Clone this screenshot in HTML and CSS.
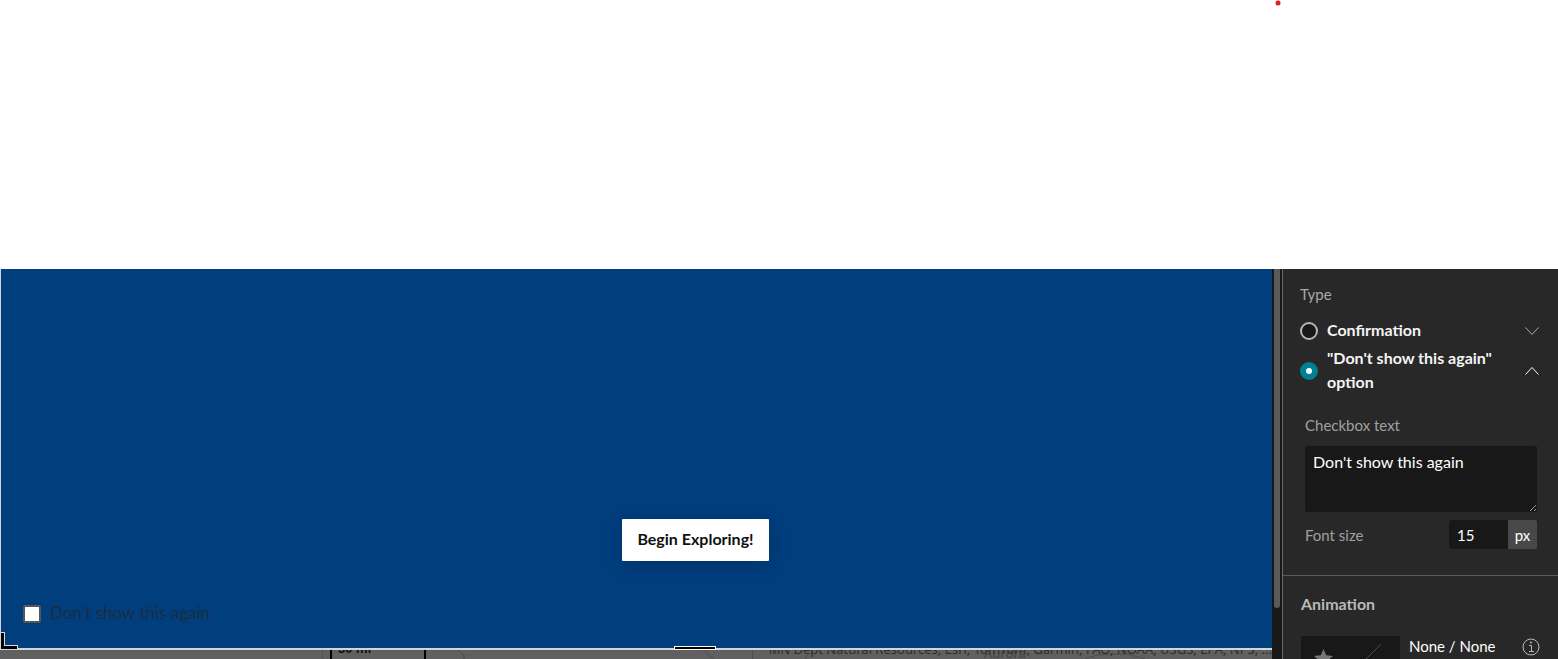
FILE: index.html
```html
<!DOCTYPE html>
<html lang="en">

<head>
  <meta charset="utf-8">
  <meta name="viewport" content="width=device-width, initial-scale=1">
  <title>Splash settings</title>
  <link rel="stylesheet" href="styles.css">
</head>

<body>
  <header class="top">
    <svg class="dot" width="6" height="6" viewBox="0 0 6 6"><circle cx="3" cy="3" r="2.5" fill="#e81c23"/></svg>
  </header>
  <div class="builder">
    <main class="canvas">
      <section class="splash">
        <button class="begin" type="button">Begin Exploring!</button>
        <label class="again"><input type="checkbox"><span>Don't show this again</span></label>
        <svg class="corner" width="18" height="18" viewBox="0 0 18 18">
          <path d="M0 0H4V13H17V17H0Z" fill="#d8d8d8"/>
          <path d="M0 1H3V14H16V17H0Z" fill="#000"/>
        </svg>
        <div class="handle"></div>
      </section>
      <div class="map">
        <svg class="roads" width="1272" height="9" viewBox="0 0 1272 9" fill="none" stroke="#4d4d4d">
          <path d="M322.500 0V9" stroke-dasharray="3 2"/>
          <path d="M457 0l7 5v4M703 0l11 9M752.500 0V9M805 9l4-6M1085 9l12-4 30-1 18 5"/>
        </svg>
        <span class="scale">30 mi</span>
        <span class="city">Aurora</span>
        <span class="credits">MN Dept Natural Resources, Esri, TomTom, Garmin, FAO, NOAA, USGS, EPA, NPS, ...</span>
      </div>
    </main>
    <div class="scrollbar"><div class="thumb"></div></div>
    <aside class="panel">
      <section class="type">
        <h2>Type</h2>
        <div class="option">
          <input type="radio" name="type" id="confirmation">
          <label for="confirmation">Confirmation</label>
          <svg class="down" width="14" height="8" viewBox="0 0 14 8"><path d="M.5.5L7 7.500 13.500.5"/></svg>
        </div>
        <div class="option tall">
          <input type="radio" name="type" id="dontshow" checked>
          <label for="dontshow">"Don't show this again" option</label>
          <svg class="up" width="14" height="8" viewBox="0 0 14 8"><path d="M.5 7.500L7 .5l6.500 7"/></svg>
        </div>
        <div class="fields">
          <label for="text">Checkbox text</label>
          <textarea id="text">Don't show this again</textarea>
          <div class="size">
            <label for="size">Font size</label>
            <div class="number"><input type="text" id="size" value="15"><span>px</span></div>
          </div>
        </div>
      </section>
      <section class="animation">
        <h3>Animation</h3>
        <div class="effect">
          <button class="preview" type="button" aria-label="Choose animation">
            <svg width="99" height="50" viewBox="0 0 99 50">
              <path d="M22.500 13l2.700 6.200 6.800.7-5.100 4.500 1.500 6.600-5.900-3.400-5.900 3.400 1.500-6.600-5.100-4.500 6.800-.7z" fill="#777"/>
              <path d="M80 8L52 36" stroke="#4a4a4a" fill="none"/>
            </svg>
          </button>
          <span>None / None</span>
          <svg class="info" width="18" height="18" viewBox="0 0 18 18" fill="none" stroke="#b8b8b8">
            <circle cx="9" cy="9" r="8"/>
            <path d="M7 7.500h2.500V13M7 13.500h5"/>
            <path d="M8 4.500h2" stroke-width="1.500"/>
          </svg>
        </div>
      </section>
    </aside>
  </div>
</body>

</html>
```
FILE: styles.css
```css
* {
  box-sizing: border-box;
}

body {
  display: flex;
  flex-direction: column;
  height: 100vh;
  margin: 0;
  overflow: hidden;
  background: #fff;
  font-family: Lato, "Liberation Sans", sans-serif;
  font-size: 15px;
}

svg {
  display: block;
  flex: none;
}

button,
input,
textarea {
  margin: 0;
  border: 0;
  font: inherit;
}

.top {
  display: flex;
  flex: none;
  justify-content: flex-end;
  height: 269px;
  padding-right: 277px;
}

.builder {
  display: flex;
  flex: 1;
  min-height: 0;
}

.canvas {
  display: flex;
  flex: 1;
  flex-direction: column;
  min-width: 0;
}

.splash {
  position: relative;
  display: flex;
  flex: 1;
  flex-direction: column;
  justify-content: flex-end;
  border-bottom: 2px solid #d5d5d5;
  border-left: 1px solid #d5d5d5;
  background: #003e7e;
}

.begin {
  align-self: center;
  width: 147px;
  height: 42px;
  margin: 0 0 41px 118px;
  padding: 0 0 4px;
  border-radius: 1px;
  background: #fff;
  color: #111;
  box-shadow: 0 4px 20px rgba(0, 0, 0, .2);
  font-size: 16px;
  font-weight: bold;
  white-space: nowrap;
}

.again {
  display: flex;
  align-items: center;
  gap: 9px;
  height: 24px;
  margin: 0 0 22px 22px;
  color: #1c2d40;
  font-size: 17px;
}

.again input {
  appearance: none;
  width: 18px;
  height: 18px;
  border: 2px solid #555;
  border-radius: 2px;
  background: #fff;
}

.again span {
  line-height: 22px;
  padding-bottom: 2px;
}

.corner {
  position: absolute;
  bottom: -2px;
  left: 0;
}

.handle {
  position: absolute;
  bottom: -2px;
  left: 53%;
  width: 42px;
  height: 4px;
  margin-left: -1px;
  border: 1px solid #fff;
  background: #000;
}

.map {
  position: relative;
  height: 9px;
  overflow: hidden;
  background: #606060;
  color: #2e2e2e;
}

.map span {
  position: absolute;
  white-space: nowrap;
}

.map .scale {
  top: -11px;
  left: 330px;
  width: 96px;
  height: 24px;
  padding-left: 6px;
  border: solid #000;
  border-width: 0 2px;
  color: #111;
  font: bold 13px/20px "Liberation Sans", sans-serif;
}

.map .city {
  top: -6px;
  left: 984px;
  color: #444;
  font: 13px/18px "Noto Sans", sans-serif;
}

.map .credits {
  top: -11px;
  right: 0;
  font: 13px/20px "Noto Sans", sans-serif;
}

.scrollbar {
  width: 10px;
  padding: 0 2px;
  background: #181818;
}

.thumb {
  height: 339px;
  border-radius: 0 0 3px 3px;
  background: #5a5a5a;
}

.panel {
  width: 276px;
  overflow: hidden;
  border-left: 1px solid #6a6a6a;
  background: #282828;
  color: #fff;
}

.type {
  height: 307px;
  padding: 13px 18px 0 17px;
  border-bottom: 1px solid #5a5a5a;
}

h2,
h3 {
  margin: 0;
  color: #a8a8a8;
  font-size: 15px;
  font-weight: normal;
  line-height: 24px;
}

h3 {
  color: #b8b8b8;
  font-size: 16px;
  font-weight: bold;
}

.option {
  display: flex;
  align-items: center;
  gap: 9px;
  height: 24px;
  margin-top: 13px;
}

.option.tall {
  height: 48px;
  margin-top: 4px;
}

.option label {
  flex: 1;
  padding-bottom: 2px;
  color: #f4f4f4;
  font-size: 16px;
  font-weight: bold;
  line-height: 24px;
}

.option input {
  appearance: none;
  width: 18px;
  height: 18px;
  border: 2px solid #b5b5b5;
  border-radius: 50%;
  background: #181818;
}

.option input:checked {
  border: 6px solid #008094;
  background: #fff;
}

.option svg {
  margin-right: 1px;
  fill: none;
  stroke: #aaa;
}

.option .up {
  stroke: #fff;
}

.fields {
  display: flex;
  flex-direction: column;
  margin: 18px 3px 0 5px;
  color: #a0a0a0;
  line-height: 24px;
}

textarea {
  height: 66px;
  margin: 9px 0 8px;
  padding: 4px 8px;
  border-radius: 2px;
  outline: 0;
  background: #181818;
  color: #fff;
  font-size: 16px;
  line-height: 24px;
  resize: vertical;
}

.size,
.number {
  display: flex;
  align-items: center;
  justify-content: space-between;
}

.number {
  width: 88px;
  height: 29px;
  border-radius: 2px;
  overflow: hidden;
  background: #484848;
  color: #fff;
}

.number input {
  width: 59px;
  height: 29px;
  padding: 0 8px;
  background: #181818;
  color: #fff;
}

.number span {
  flex: 1;
  text-align: center;
}

.animation {
  padding: 16px 18px 0 18px;
}

.effect {
  display: flex;
  gap: 9px;
  margin-top: 20px;
}

.preview {
  width: 99px;
  height: 50px;
  padding: 0;
  border-radius: 2px;
  background: #181818;
}

.effect span {
  flex: 1;
  line-height: 20px;
}

.info {
  margin-top: 2px;
}
```
